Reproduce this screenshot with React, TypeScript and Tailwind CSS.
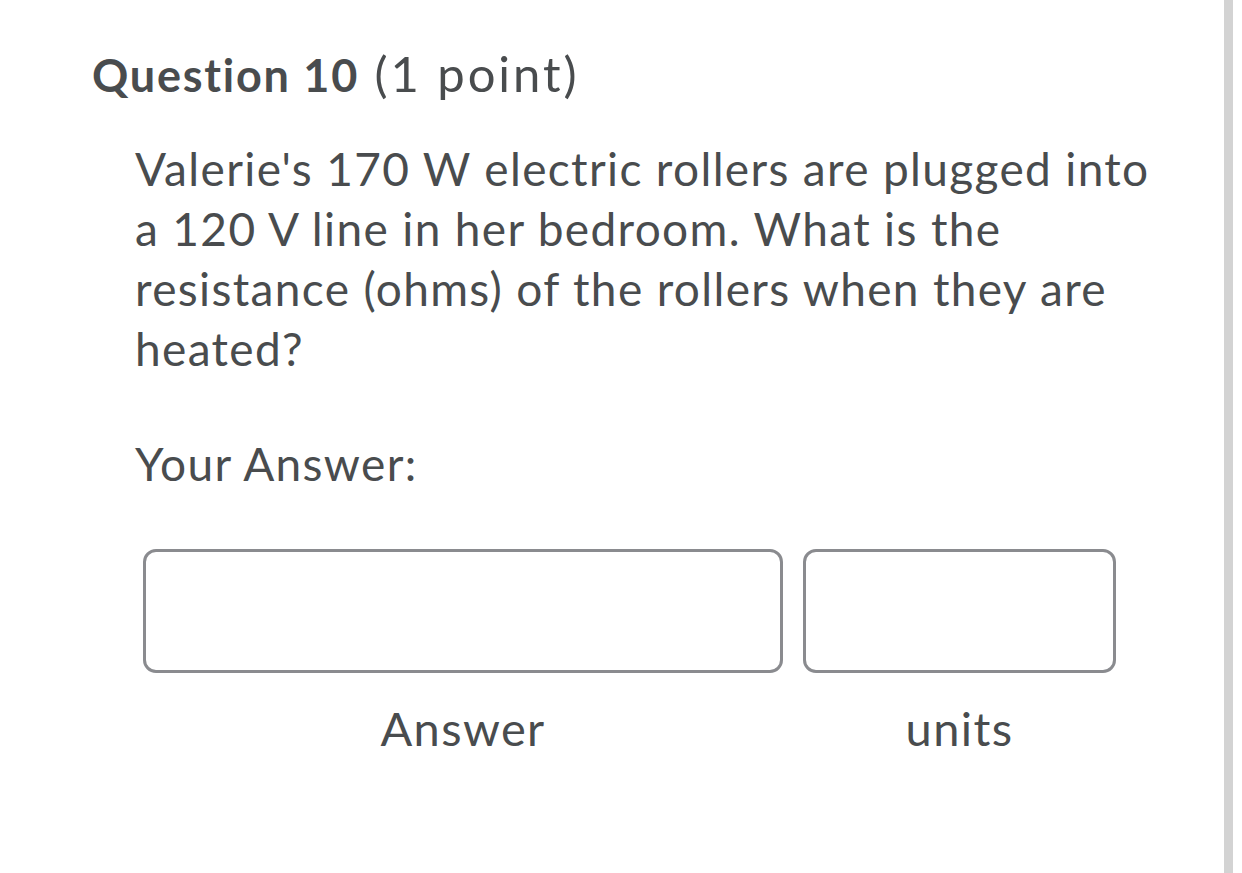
export default function App() {
  return (
    <div className="flex h-[873px] w-full bg-white font-['Lato',sans-serif] text-[#494c4e]">
      <main className="flex-1">
        <h2 className="ml-[92px] mt-[47px] text-[45px] leading-[56px]">
          <span className="font-bold tracking-[1.75px]">Question 10</span>{" "}
          <span className="ml-[4px] text-[49px] font-normal leading-none tracking-[2.9px]">(1 point)</span>
        </h2>
        <div className="ml-[135px] mt-[36px] w-[1045px] tracking-[1.35px]">
          <p className="text-[46px] leading-[60px]">
            Valerie's 170 W electric rollers are plugged into a 120 V line in her bedroom. What is the resistance (ohms) of the rollers when they are heated?
          </p>
          <p className="mt-[55px] text-[46px] leading-[60px]">Your Answer:</p>
        </div>
        <div className="ml-[143px] mt-[55px] flex gap-[20px]">
          <div className="flex w-[640px] flex-col">
            <input
              type="text"
              aria-label="Answer"
              className="h-[124px] w-full rounded-[13px] border-[3px] border-[#8a8b8f] bg-white outline-none"
            />
            <span className="mt-[25px] text-center text-[47px] leading-[60px] tracking-[1.4px]">Answer</span>
          </div>
          <div className="flex w-[313px] flex-col">
            <input
              type="text"
              aria-label="units"
              className="h-[124px] w-full rounded-[13px] border-[3px] border-[#8a8b8f] bg-white outline-none"
            />
            <span className="mt-[25px] text-center text-[47px] leading-[60px] tracking-[1.4px]">units</span>
          </div>
        </div>
      </main>
      <div className="mr-[9px] h-full w-[9px] bg-[#d3d3d3]" />
    </div>
  );
}
